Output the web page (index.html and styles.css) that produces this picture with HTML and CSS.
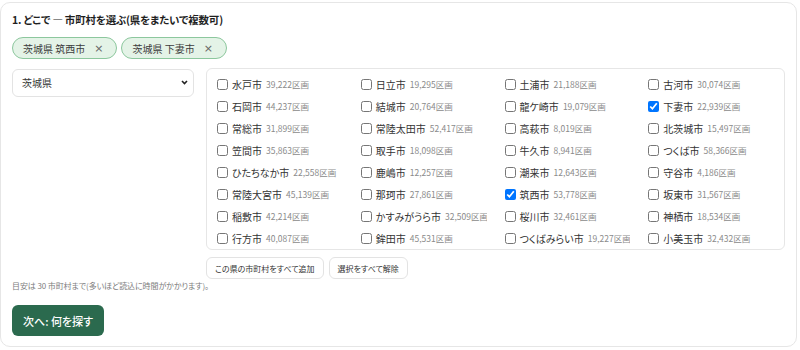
FILE: index.html
```html
<!DOCTYPE html>
<html lang="ja">
<head>
<meta charset="utf-8">
<title>市町村を選ぶ</title>
<link rel="stylesheet" href="styles.css">
</head>
<body>
<section class="card">
  <h2 class="title">1. どこで — 市町村を選ぶ(県をまたいで複数可)</h2>
  <div class="chips">
    <span class="chip">茨城県 筑西市<button class="chip-x" type="button">×</button></span>
    <span class="chip">茨城県 下妻市<button class="chip-x" type="button">×</button></span>
  </div>
  <div class="picker">
    <div class="select-wrap">
      <select class="pref">
        <option>茨城県</option>
      </select>
      <svg class="chev" width="7" height="5" viewBox="0 0 7 5"><path d="M1 1l2.5 2.5L6 1" fill="none" stroke="#222" stroke-width="1.6"/></svg>
    </div>
    <div class="right">
      <div class="list">
        <label class="item"><input type="checkbox"><span class="nm">水戸市</span><span class="ct">39,222区画</span></label>
        <label class="item"><input type="checkbox"><span class="nm">日立市</span><span class="ct">19,295区画</span></label>
        <label class="item"><input type="checkbox"><span class="nm">土浦市</span><span class="ct">21,188区画</span></label>
        <label class="item"><input type="checkbox"><span class="nm">古河市</span><span class="ct">30,074区画</span></label>
        <label class="item"><input type="checkbox"><span class="nm">石岡市</span><span class="ct">44,237区画</span></label>
        <label class="item"><input type="checkbox"><span class="nm">結城市</span><span class="ct">20,764区画</span></label>
        <label class="item"><input type="checkbox"><span class="nm">龍ケ崎市</span><span class="ct">19,079区画</span></label>
        <label class="item"><input type="checkbox" checked><span class="nm">下妻市</span><span class="ct">22,939区画</span></label>
        <label class="item"><input type="checkbox"><span class="nm">常総市</span><span class="ct">31,899区画</span></label>
        <label class="item"><input type="checkbox"><span class="nm">常陸太田市</span><span class="ct">52,417区画</span></label>
        <label class="item"><input type="checkbox"><span class="nm">高萩市</span><span class="ct">8,019区画</span></label>
        <label class="item"><input type="checkbox"><span class="nm">北茨城市</span><span class="ct">15,497区画</span></label>
        <label class="item"><input type="checkbox"><span class="nm">笠間市</span><span class="ct">35,863区画</span></label>
        <label class="item"><input type="checkbox"><span class="nm">取手市</span><span class="ct">18,098区画</span></label>
        <label class="item"><input type="checkbox"><span class="nm">牛久市</span><span class="ct">8,941区画</span></label>
        <label class="item"><input type="checkbox"><span class="nm">つくば市</span><span class="ct">58,366区画</span></label>
        <label class="item"><input type="checkbox"><span class="nm">ひたちなか市</span><span class="ct">22,558区画</span></label>
        <label class="item"><input type="checkbox"><span class="nm">鹿嶋市</span><span class="ct">12,257区画</span></label>
        <label class="item"><input type="checkbox"><span class="nm">潮来市</span><span class="ct">12,643区画</span></label>
        <label class="item"><input type="checkbox"><span class="nm">守谷市</span><span class="ct">4,186区画</span></label>
        <label class="item"><input type="checkbox"><span class="nm">常陸大宮市</span><span class="ct">45,139区画</span></label>
        <label class="item"><input type="checkbox"><span class="nm">那珂市</span><span class="ct">27,861区画</span></label>
        <label class="item"><input type="checkbox" checked><span class="nm">筑西市</span><span class="ct">53,778区画</span></label>
        <label class="item"><input type="checkbox"><span class="nm">坂東市</span><span class="ct">31,567区画</span></label>
        <label class="item"><input type="checkbox"><span class="nm">稲敷市</span><span class="ct">42,214区画</span></label>
        <label class="item"><input type="checkbox"><span class="nm">かすみがうら市</span><span class="ct">32,509区画</span></label>
        <label class="item"><input type="checkbox"><span class="nm">桜川市</span><span class="ct">32,461区画</span></label>
        <label class="item"><input type="checkbox"><span class="nm">神栖市</span><span class="ct">18,534区画</span></label>
        <label class="item"><input type="checkbox"><span class="nm">行方市</span><span class="ct">40,087区画</span></label>
        <label class="item"><input type="checkbox"><span class="nm">鉾田市</span><span class="ct">45,531区画</span></label>
        <label class="item"><input type="checkbox"><span class="nm">つくばみらい市</span><span class="ct">19,227区画</span></label>
        <label class="item"><input type="checkbox"><span class="nm">小美玉市</span><span class="ct">32,432区画</span></label>
        <label class="item"><input type="checkbox"><span class="nm">茨城町</span><span class="ct">20,115区画</span></label>
        <label class="item"><input type="checkbox"><span class="nm">大洗町</span><span class="ct">9,870区画</span></label>
        <label class="item"><input type="checkbox"><span class="nm">城里町</span><span class="ct">14,302区画</span></label>
        <label class="item"><input type="checkbox"><span class="nm">東海村</span><span class="ct">11,648区画</span></label>
        <label class="item"><input type="checkbox"><span class="nm">大子町</span><span class="ct">16,021区画</span></label>
        <label class="item"><input type="checkbox"><span class="nm">美浦村</span><span class="ct">7,433区画</span></label>
        <label class="item"><input type="checkbox"><span class="nm">阿見町</span><span class="ct">15,870区画</span></label>
        <label class="item"><input type="checkbox"><span class="nm">河内町</span><span class="ct">8,207区画</span></label>
      </div>
      <div class="actions">
        <button class="btn" type="button">この県の市町村をすべて追加</button>
        <button class="btn" type="button">選択をすべて解除</button>
      </div>
    </div>
  </div>
  <p class="note">目安は 30 市町村まで(多いほど読込に時間がかかります)。</p>
  <button class="next" type="button">次へ: 何を探す</button>
</section>
</body>
</html>
```
FILE: styles.css
```css
* { box-sizing: border-box; }
html, body { margin: 0; padding: 0; background: #fff; }
body {
  font-family: "Noto Sans CJK JP", "Noto Sans", sans-serif;
  font-feature-settings: "palt";
  color: #222;
  padding: 2px 3px 3px 0;
}
.card {
  border: 1px solid #e6e6e6;
  border-radius: 10px;
  padding: 9px 11px 9px 11px;
  height: 345px;
  background: #fff;
}
.title {
  margin: 0;
  font-size: 10.5px;
  line-height: 16px;
  font-weight: 600;
  letter-spacing: -0.2px;
  color: #1f1f1f;
}
.chips {
  display: flex;
  gap: 4px;
  margin-top: 9px;
}
.chip {
  display: inline-flex;
  align-items: center;
  height: 22px;
  padding: 0 13px 0 10px;
  border: 1px solid #8cc79d;
  background: #e4f3e7;
  border-radius: 11px;
  font-size: 10px;
  color: #3c3c3c;
}
.chip-x {
  border: 0;
  background: none;
  padding: 0;
  margin-left: 9px;
  font-size: 11px;
  line-height: 1;
  color: #666;
  font-family: "DejaVu Sans", sans-serif;
}
.picker {
  display: flex;
  gap: 12px;
  margin-top: 9px;
}
.select-wrap {
  position: relative;
  width: 182px;
  height: 28px;
  flex: none;
}
.pref {
  appearance: none;
  -webkit-appearance: none;
  width: 100%;
  height: 28px;
  border: 1px solid #e3e3e3;
  border-radius: 6px;
  background: #fff;
  padding: 0 9px;
  font-family: inherit;
  font-size: 10px;
  color: #333;
}
.chev {
  position: absolute;
  right: 6px;
  top: 12px;
}
.right {
  flex: 1;
  min-width: 0;
}
.list {
  height: 182px;
  border: 1px solid #e6e6e6;
  border-radius: 6px;
  padding: 4px 10px;
  overflow-y: auto;
  scrollbar-width: none;
  display: grid;
  grid-template-columns: repeat(4, minmax(0, 1fr));
  column-gap: 18px;
  grid-auto-rows: 22px;
  align-content: start;
}
.item {
  display: flex;
  align-items: center;
  white-space: nowrap;
  overflow: hidden;
}
.item input {
  margin: 0 4px 0 0;
  width: 11px;
  height: 11px;
  flex: none;
}
.nm {
  font-size: 10px;
  color: #333;
}
.ct {
  font-size: 8.5px;
  color: #8a8a8a;
  margin-left: 4px;
}
.actions {
  display: flex;
  gap: 5px;
  margin-top: 7px;
}
.btn {
  height: 22px;
  padding: 0 8px;
  border: 1px solid #e3e3e3;
  border-radius: 6px;
  background: #fff;
  font-family: inherit;
  font-feature-settings: "palt";
  font-size: 8px;
  color: #333;
}
.note {
  margin: 1px 0 0;
  font-size: 8px;
  line-height: 12px;
  letter-spacing: -0.1px;
  color: #7d7d7d;
}
.next {
  margin-top: 13px;
  height: 31px;
  padding: 0 11px;
  border: 0;
  border-radius: 6px;
  background: #2b6a4e;
  color: #fff;
  font-family: inherit;
  font-feature-settings: "palt";
  font-size: 11px;
  font-weight: 500;
}
```
